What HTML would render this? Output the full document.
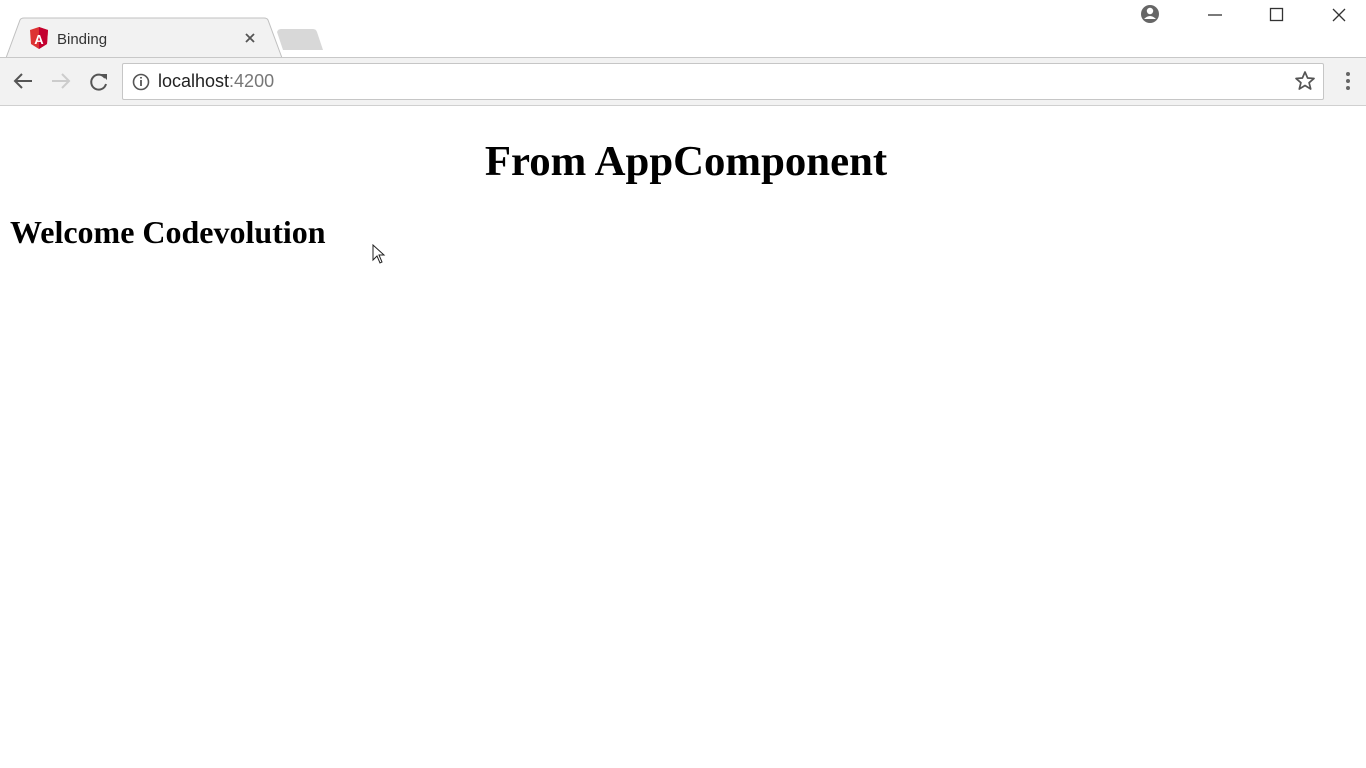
<!DOCTYPE html>
<html><head><meta charset="utf-8"><style>
*{margin:0;padding:0;box-sizing:border-box}
body{width:1366px;height:768px;overflow:hidden;background:#fff;position:relative;font-family:"Liberation Sans",sans-serif}
.titlebar{position:absolute;left:0;top:0;width:1366px;height:57px;background:#fff}
.toolbar{position:absolute;left:0;top:57px;width:1366px;height:49px;background:#f2f2f2;border-top:1px solid #c8c8c8;border-bottom:1px solid #d0d0d0}
.omni{position:absolute;left:122px;top:63px;width:1202px;height:37px;background:#fff;border:1px solid #c6c6c6;border-radius:2px}
.url{position:absolute;left:158px;top:71px;font-size:18px;color:#222}
.url span{color:#777}
h1{position:absolute;left:0;width:1372px;top:137px;text-align:center;font:bold 42.8px "Liberation Serif",serif;color:#000}
h2{position:absolute;left:10px;top:214px;font:bold 32px "Liberation Serif",serif;color:#000}
</style></head><body>
<div class="titlebar"></div>
<svg style="position:absolute;left:0;top:0" width="1366" height="60">
<path d="M6 58 L20 20 Q21 18 24 18 L264 18 Q267 18 268 20 L282 58 Z" fill="#f2f2f2" stroke="#c0c0c0"/>
<path d="M277 32 Q278 29 281 29 L313 29 Q316 29 317 32 L323 50 L283 50 Z" fill="#d8d8d8"/>
<path d="M39 27 L48 30 L47 44 L39 49 L31 44 L30 30 Z" fill="#dd3333"/>
<path d="M39 27 L48 30 L47 44 L39 49 Z" fill="#c3002f"/>
<text x="39" y="44" font-family="Liberation Sans" font-weight="bold" font-size="13" fill="#fff" text-anchor="middle">A</text>
<text x="57" y="44" font-family="Liberation Sans" font-size="15" fill="#333">Binding</text>
<path d="M246 34 l8 8 M254 34 l-8 8" stroke="#555" stroke-width="1.8"/>
<circle cx="1150" cy="14" r="9" fill="#666"/>
<circle cx="1150" cy="11" r="3.2" fill="#fff"/>
<path d="M1144 19 Q1150 13 1156 19" fill="#fff"/>
<path d="M1208 15 h14" stroke="#333" stroke-width="1.3"/>
<rect x="1270.5" y="8.5" width="12" height="12" fill="none" stroke="#333" stroke-width="1.3"/>
<path d="M1333 9 l12 12 M1345 9 l-12 12" stroke="#333" stroke-width="1.3"/>
</svg>
<div class="toolbar"></div>
<div class="omni"></div>
<svg style="position:absolute;left:0;top:60px" width="1366" height="45">
<path d="M32 21 H15 M22 14 L15 21 L22 28" stroke="#555" stroke-width="2" fill="none"/>
<path d="M52 21 H69 M62 14 L69 21 L62 28" stroke="#ccc" stroke-width="2" fill="none"/>
<path d="M105 18 A7.5 7.5 0 1 0 106 24" stroke="#555" stroke-width="2" fill="none"/>
<path d="M101 14 L107 14 L107 20 Z" fill="#555"/>
<circle cx="141" cy="22" r="7.5" stroke="#555" stroke-width="1.6" fill="none"/>
<path d="M141 20 v6 M141 17 v1.5" stroke="#555" stroke-width="1.8"/>
<path d="M1305 12 l2.6 6 6.4.5 -4.9 4.2 1.6 6.3 -5.7-3.5 -5.7 3.5 1.6-6.3 -4.9-4.2 6.4-.5z" fill="none" stroke="#555" stroke-width="1.7" stroke-linejoin="round"/>
<circle cx="1348" cy="14" r="2" fill="#666"/><circle cx="1348" cy="21" r="2" fill="#666"/><circle cx="1348" cy="28" r="2" fill="#666"/>
</svg>
<div class="url">localhost<span>:4200</span></div>
<h1>From AppComponent</h1>
<h2>Welcome Codevolution</h2>
<svg style="position:absolute;left:372px;top:244px" width="16" height="22"><path d="M1 1 L1 16 L5 12 L8 19 L10 18 L7 11 L12 11 Z" fill="#fff" stroke="#222" stroke-width="1"/></svg>
</body></html>
